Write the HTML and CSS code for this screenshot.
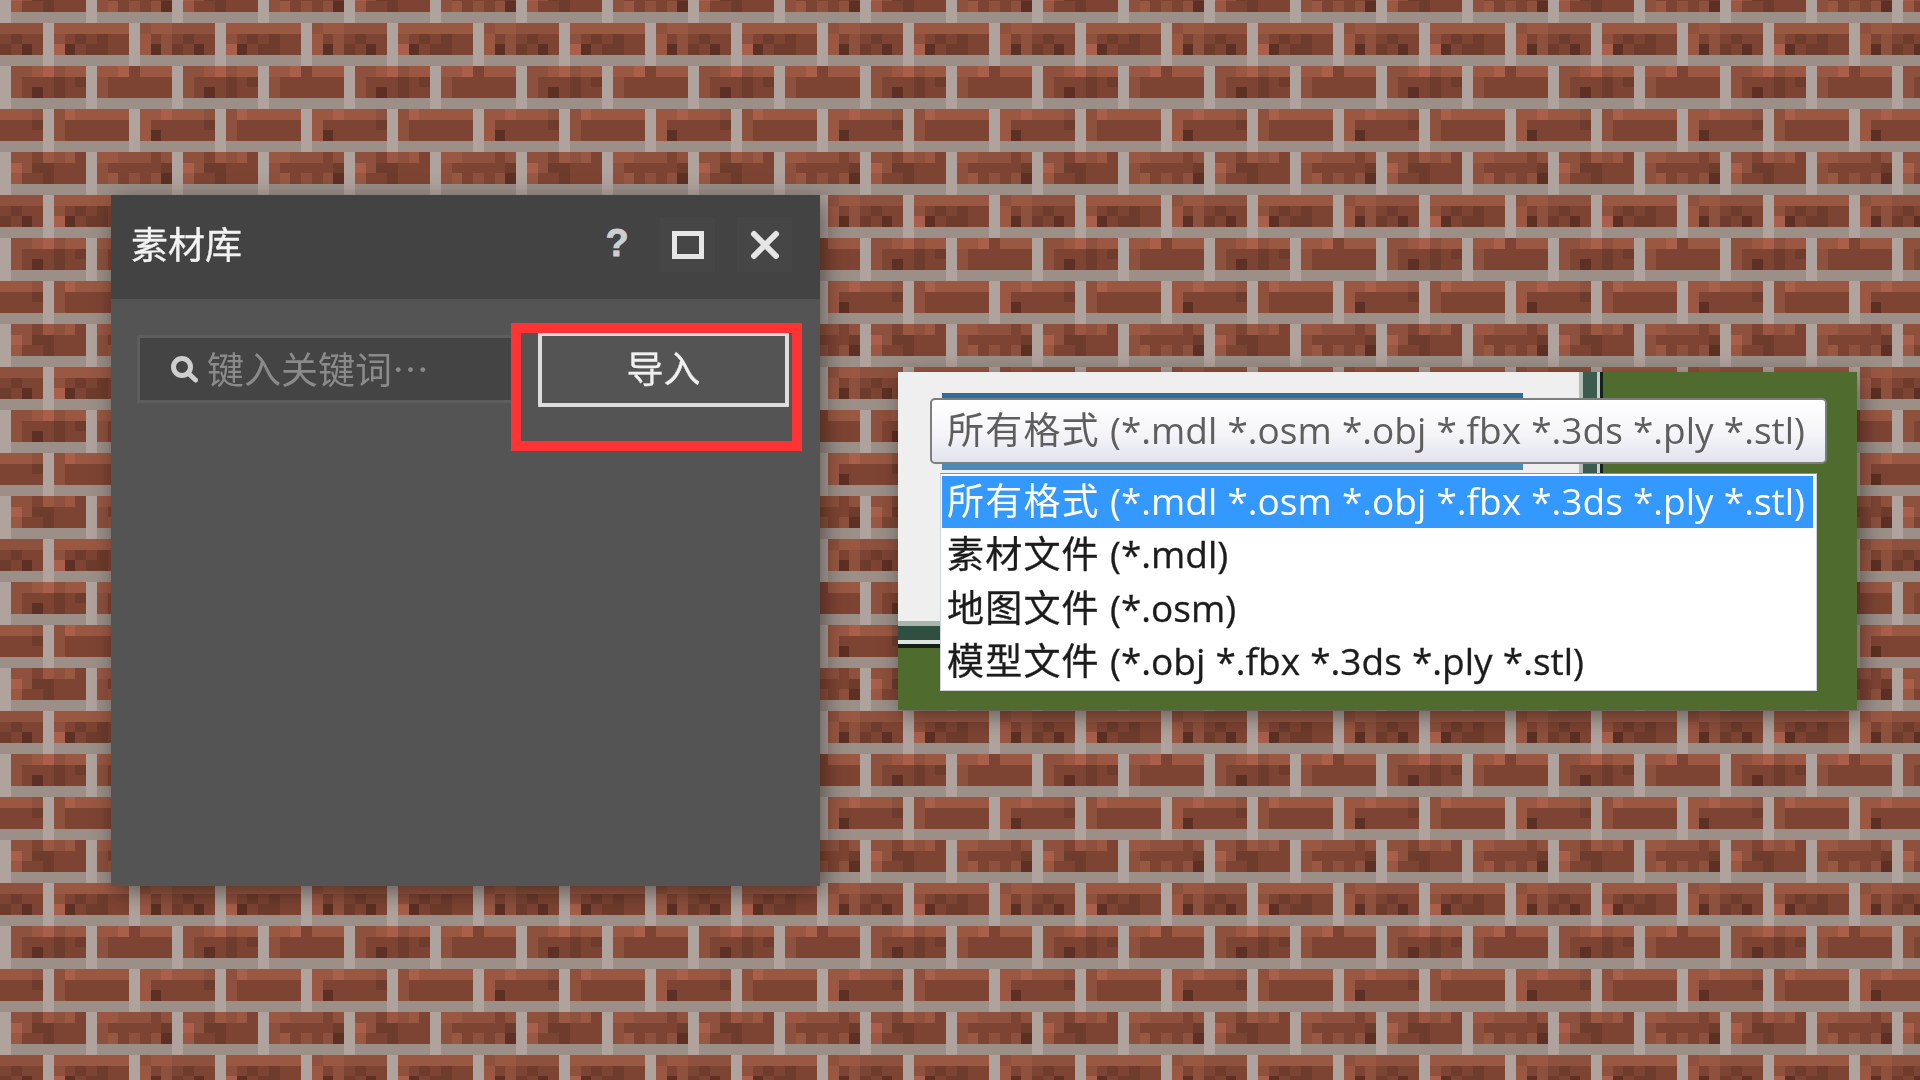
FILE: index.html
```html
<!DOCTYPE html>
<html lang="zh-CN">
  <head>
    <meta charset="UTF-8" />
    <title>素材库</title>
    <link rel="stylesheet" href="styles.css">
  </head>
  <body>
    <canvas id="bricks" class="bricks" width="1940" height="1100"></canvas>

    <section class="library">
      <header class="library-title">
        <h1>素材库</h1>
        <div class="window-buttons">
          <button class="icon-button help" type="button">?</button>
          <button class="icon-button" type="button">
            <svg width="32" height="28" viewBox="0 0 32 28">
              <rect x="2.5" y="2.5" width="27" height="23" fill="none" stroke="#e6e6e6" stroke-width="5" />
            </svg>
          </button>
          <button class="icon-button" type="button">
            <svg width="30" height="30" viewBox="0 0 30 30">
              <path d="M4 4 L26 26 M26 4 L4 26" fill="none" stroke="#e6e6e6" stroke-width="6" stroke-linecap="round" />
            </svg>
          </button>
        </div>
      </header>
      <div class="library-tools">
        <div class="search">
          <svg width="28" height="28" viewBox="0 0 28 28">
            <circle cx="12" cy="12" r="8.5" fill="none" stroke="#cfcfcf" stroke-width="5" />
            <path d="M18 18 L25.5 25" fill="none" stroke="#cfcfcf" stroke-width="5" stroke-linecap="round" />
          </svg>
          <span>键入关键词…</span>
        </div>
        <button class="import" type="button"><span>导入</span></button>
      </div>
      <div class="highlight"></div>
    </section>

    <section class="formats">
      <div class="scene">
        <div class="scene-wall"></div>
        <div class="scene-edge-v"></div>
        <div class="scene-edge-h"></div>
      </div>
      <div class="stripe stripe-top"></div>
      <div class="stripe stripe-bottom"></div>
      <div class="combo"><span class="kind">所有格式</span> (*.mdl *.osm *.obj *.fbx *.3ds *.ply *.stl)</div>
      <ul class="combo-list">
        <li class="selected"><span class="kind">所有格式</span> (*.mdl *.osm *.obj *.fbx *.3ds *.ply *.stl)</li>
        <li><span class="kind">素材文件</span> (*.mdl)</li>
        <li><span class="kind">地图文件</span> (*.osm)</li>
        <li><span class="kind">模型文件</span> (*.obj *.fbx *.3ds *.ply *.stl)</li>
      </ul>
    </section>

    <script src="bricks.js"></script>
  </body>
</html>
```

FILE: styles.css
```css
* {
  box-sizing: border-box;
}
html,
body {
  margin: 0;
  padding: 0;
  height: 100%;
  overflow: hidden;
}
body {
  position: relative;
  background: #7e4433;
  font-family: "Noto Sans CJK SC", sans-serif;
  font-size: 37px;
}
.bricks {
  position: absolute;
  left: -10px;
  top: -10px;
  display: block;
  filter: blur(0.7px);
}

/* left window */
.library {
  position: absolute;
  left: 111px;
  top: 195px;
  width: 709px;
  height: 691px;
  display: flex;
  flex-direction: column;
  background: #545454;
  box-shadow: 4px 6px 22px rgba(0, 0, 0, 0.45);
}
.library-title {
  height: 104px;
  flex: none;
  display: flex;
  align-items: center;
  justify-content: space-between;
  padding: 0 28px 0 20px;
  background: #434343;
}
.library-title h1 {
  margin: 0 0 9px;
  font-size: 37px;
  font-weight: 400;
  color: #f2f2f2;
  -webkit-text-stroke: 0.4px #f2f2f2;
  filter: blur(0.4px);
}
.window-buttons {
  display: flex;
  gap: 22px;
  margin-bottom: 5px;
}
.icon-button {
  width: 55px;
  height: 55px;
  padding: 0;
  display: flex;
  align-items: center;
  justify-content: center;
  background: #464646;
  border: none;
  font-family: "Liberation Sans", sans-serif;
  color: #cfcfcf;
}
.help {
  padding: 0 0 2px 13px;
  background: none;
  font-size: 38px;
  font-weight: bold;
  -webkit-text-stroke: 0.8px #cfcfcf;
}
.library-tools {
  display: flex;
  padding: 33px 31px 0 26px;
}
.search {
  width: 374px;
  height: 68px;
  display: flex;
  align-items: center;
  gap: 9px;
  padding-left: 30px;
  margin-top: 3px;
  background: #444444;
  border: 3px solid #5e5e5e;
  border-right: none;
  color: #8a8a8a;
}
.search span {
  margin-top: -2px;
  filter: blur(0.4px);
}
.import {
  width: 251px;
  height: 75px;
  margin-left: 27px;
  padding: 0;
  background: #545454;
  border: 4px solid #dddddd;
  border-radius: 1px;
  font-family: inherit;
  font-size: 37px;
  color: #f0f0f0;
}
.import span {
  display: block;
  margin-top: -5px;
  -webkit-text-stroke: 0.3px #f0f0f0;
  filter: blur(0.4px);
}
.highlight {
  position: absolute;
  left: 400px;
  top: 128px;
  width: 291px;
  height: 128px;
  border: 10px solid #ff3333;
}

/* right window */
.formats {
  position: absolute;
  left: 898px;
  top: 372px;
  width: 959px;
  height: 338px;
  background: #4f6b2d;
  box-shadow: 4px 6px 22px rgba(0, 0, 0, 0.45);
  font-family: "Open Sans", "Noto Sans CJK SC", sans-serif;
  word-spacing: 0.6px;
}
.kind {
  letter-spacing: 1.2px;
}
.scene {
  width: 705px;
  display: grid;
  grid-template-columns: 681px 24px;
  grid-template-rows: 249px 27px;
}
.scene-wall {
  background: #efefef;
}
.scene-edge-v {
  background: linear-gradient(to right, #b5bdb8 0 4px, #3a5c4f 4px 18px, #c8d0ca 18px 21px, #15201a 21px);
}
.scene-edge-h {
  grid-column: 1 / 3;
  background: linear-gradient(to bottom, #a9b5ad 0 5px, #2f4f40 5px 19px, #dfe6e1 19px 23px, #15201a 23px);
}
.stripe {
  position: absolute;
  left: 44px;
  width: 581px;
  height: 5px;
}
.stripe-top {
  top: 21px;
  background: #2f6d96;
}
.stripe-bottom {
  top: 92px;
  height: 6px;
  background: #4a8ab5;
}
.combo {
  position: absolute;
  left: 32px;
  top: 26px;
  width: 897px;
  height: 66px;
  padding: 0 0 0 15px;
  line-height: 60px;
  white-space: nowrap;
  color: #5e5e5e;
  background: linear-gradient(to bottom, #ffffff, #f6f6fa 50%, #e3e3ee);
  border: 2px solid #7d7d7d;
  border-radius: 5px;
}
.combo-list {
  position: absolute;
  left: 42px;
  top: 101px;
  width: 877px;
  height: 218px;
  margin: 0;
  padding: 2px 3px 2px 1px;
  list-style: none;
  background: #ffffff;
  border: 1px solid #cfd3dc;
  border-top-color: #8a8f96;
}
.combo-list li {
  height: 53.5px;
  padding-left: 5px;
  line-height: 52px;
  white-space: nowrap;
  color: #1c1c1c;
  -webkit-text-stroke: 0.3px #1c1c1c;
  filter: blur(0.4px);
}
.combo-list li.selected {
  height: 52px;
  line-height: 50px;
  background: #3399ff;
  color: #ffffff;
  -webkit-text-stroke: 0;
}
```

FILE: bricks.js
```js
// 16x16 brick tile, one letter per texture pixel
const colors = {
  n: "#b0a29c",
  m: "#9b8f88",
  H: "#a95f49",
  L: "#9a5843",
  l: "#8e513d",
  b: "#7e4433",
  d: "#6e3c2c",
  D: "#5c3024",
};
const tile = [
  "nLbbdbbbnlLblblD",
  "nmmmmmmmnmmmmmmm",
  "llllnLLLLLLLnlLL",
  "bdbbnlbdbdbbnLbl",
  "dbDbnHDbddbbnLDl",
  "mmmmnmmmmmmmnmmm",
  "nllLHlLLnLLHbLLL",
  "nlbbbdbdnlbbbbbb",
  "nlbDbdbbnlbbbbbb",
  "nmmmmmmmnmmmmmmm",
  "LLLlnlHLLLLLnLLH",
  "bbbdnlbbbbbbnLbb",
  "bbbbnlbbbbbbnLDb",
  "mmmmnmmmmmmmnmmm",
  "nllbLlLbnLLlllbl",
  "nHlddbbbnlbbbbbd",
];

const canvas = document.getElementById("bricks");
const ctx = canvas.getContext("2d");
const size = 10.75;
const offsetX = 10 - size * 16;
const offsetY = 11.25 - size * 16;

for (let row = 0; row * size + offsetY < canvas.height; row++) {
  const top = Math.round(row * size + offsetY);
  const bottom = Math.round((row + 1) * size + offsetY);
  for (let col = 0; col * size + offsetX < canvas.width; col++) {
    const left = Math.round(col * size + offsetX);
    const right = Math.round((col + 1) * size + offsetX);
    ctx.fillStyle = colors[tile[row % 16][col % 16]];
    ctx.fillRect(left, top, right - left, bottom - top);
  }
}
```
